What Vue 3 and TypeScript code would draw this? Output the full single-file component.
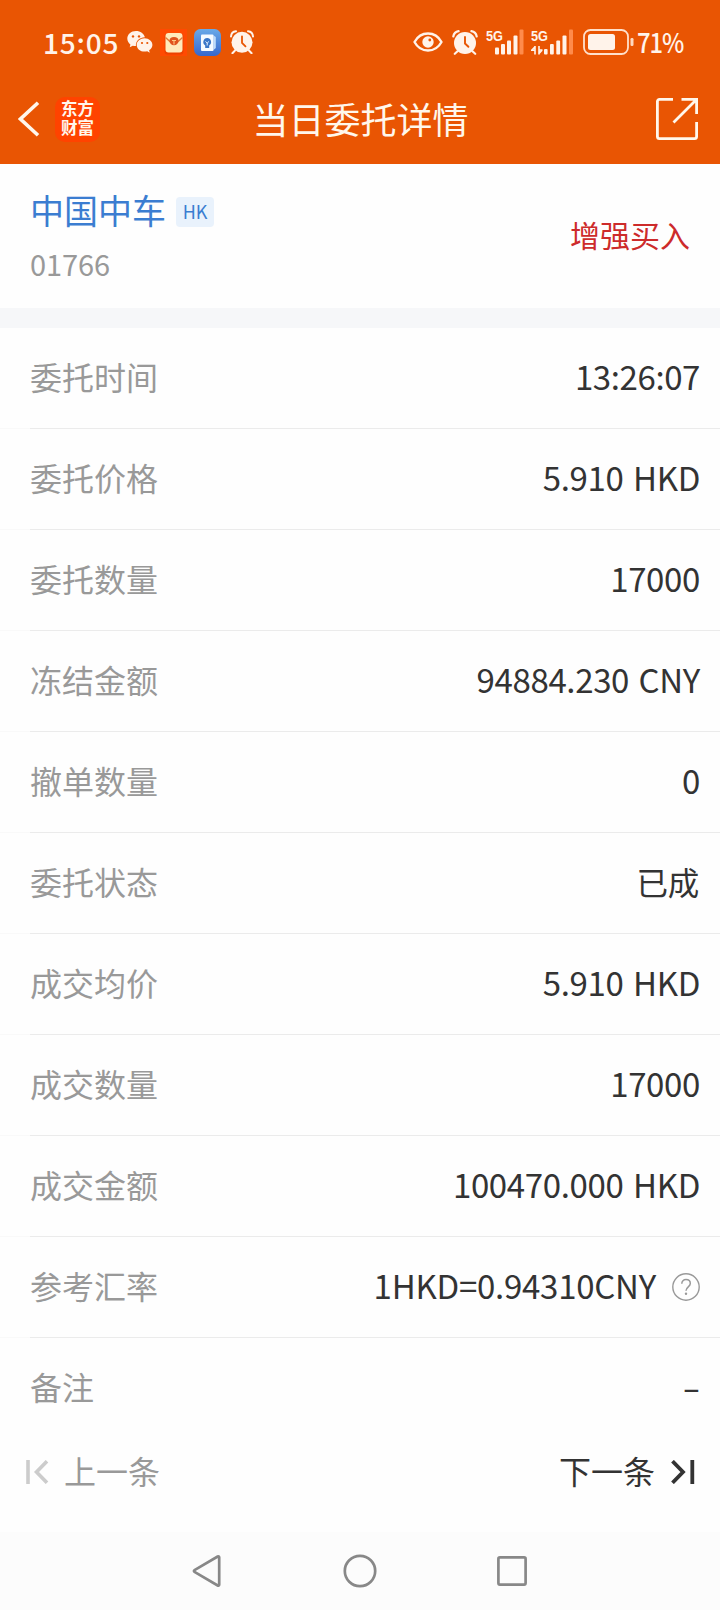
<script setup lang="ts">
interface DetailRow {
  label: string
  value: string
  help?: boolean
  kind?: string
}

const rows: DetailRow[] = [
  { label: '委托时间', value: '13:26:07', kind: 'time' },
  { label: '委托价格', value: '5.910 HKD' },
  { label: '委托数量', value: '17000' },
  { label: '冻结金额', value: '94884.230 CNY' },
  { label: '撤单数量', value: '0' },
  { label: '委托状态', value: '已成', kind: 'cjk' },
  { label: '成交均价', value: '5.910 HKD' },
  { label: '成交数量', value: '17000' },
  { label: '成交金额', value: '100470.000 HKD' },
  { label: '参考汇率', value: '1HKD=0.94310CNY', help: true, kind: 'rate' },
  { label: '备注', value: '-', kind: 'dash' },
]
</script>

<template>
  <div class="screen">
    <header class="top">
      <div class="status">
        <span class="clock">15:05</span>
        <svg class="wechat" width="26" height="23" viewBox="0 0 26 23">
          <path fill="#fff3ea" d="M9 0C4 0 .3 3.400.3 7.600c0 2.400 1.200 4.500 3.100 5.900L2.700 16.300l3.100-1.600c1 .3 2 .4 3.100.4C8.600 9.800 12.500 6.300 17.900 6.200 17 2.600 13.400 0 9 0Z" />
          <path fill="#fff3ea" d="M17.600 7.200c-4.400 0-7.900 3-7.900 6.700s3.500 6.700 7.900 6.700c.9 0 1.800-.1 2.600-.4l2.600 1.500-.7-2.400c2-1.200 3.300-3.200 3.300-5.400 0-3.700-3.500-6.700-7.800-6.700Z" />
          <g fill="#e95503"><circle cx="6" cy="5.400" r="1.200" /><circle cx="12" cy="5.400" r="1.200" /><circle cx="15" cy="12" r="1.100" /><circle cx="20.300" cy="12" r="1.100" /></g>
        </svg>
        <svg class="envelope" width="27" height="27" viewBox="0 0 27 27">
          <rect width="27" height="27" fill="#ff4a02" />
          <rect x="4.500" y="4.500" width="19" height="21" rx="3" fill="#c83500" opacity=".35" />
          <rect x="5.500" y="4" width="17" height="19.500" rx="3" fill="#ffeabc" />
          <path d="M5.500 8.500 10.500 13h7l5-4.500" fill="none" stroke="#e07a3c" stroke-width="1.400" />
          <path d="M9.500 11.500a4.500 3.500 0 0 1 9 0c0 3-2 4.800-4.500 4.800s-4.500-1.800-4.500-4.800Z" fill="#e0531e" />
          <path d="M12 11.500h4M14 11.500v4" stroke="#ffc884" stroke-width="1.100" />
        </svg>
        <svg class="bluebook" width="27" height="27" viewBox="0 0 27 27">
          <defs><linearGradient id="book" x1="0" y1="0" x2="0" y2="1"><stop offset="0" stop-color="#69a9e8" /><stop offset="1" stop-color="#3667cd" /></linearGradient></defs>
          <rect width="27" height="27" rx="6.500" fill="url(#book)" />
          <path d="M19.500 6.500 21.800 8v11l-2.300 2" fill="#bfdcfa" />
          <rect x="7" y="5.500" width="12.500" height="16.500" rx="1" fill="#f5faff" />
          <path d="M13.200 9a4 4 0 0 0-2 7.400V19h4v-2.600a4 4 0 0 0-2-7.400Z" fill="#3975c7" />
          <path d="m11.500 12.500 1.700 1.500 1.700-1.500M13.200 14v2.500" fill="none" stroke="#e6f2ff" />
        </svg>
        <svg class="alarm left-alarm" width="24" height="24" viewBox="0 0 24 24">
          <circle cx="12" cy="12.300" r="10.500" fill="#fff3ea" />
          <path d="M1 6.500C1.200 3.500 3.200 1.500 6 1.200M23 6.500c-.2-3-2.200-5-5-5.300M5 20.500l-2.600 2.700M19 20.500l2.600 2.700" fill="none" stroke="#fff3ea" stroke-width="2" stroke-linecap="round" />
          <path d="M12 6.300v6.500l3.500 3.600" fill="none" stroke="#e95503" stroke-width="1.800" stroke-linecap="round" />
        </svg>
        <span class="spring"></span>
        <svg class="eye" width="30" height="20" viewBox="0 0 30 20">
          <path d="M1.500 10C4.500 4.500 9.500 1.500 15 1.500S25.500 4.500 28.500 10C25.500 15.500 20.500 18.500 15 18.500S4.500 15.500 1.500 10Z" fill="none" stroke="#fff3ea" stroke-width="2.400" stroke-linejoin="round" />
          <circle cx="15" cy="10" r="5.700" fill="#fff3ea" /><circle cx="16.800" cy="8" r="1.400" fill="#e95503" />
        </svg>
        <svg class="alarm" width="26" height="25" viewBox="0 0 26 25">
          <circle cx="13" cy="13" r="11" fill="#fff3ea" />
          <path d="M1.300 6.500C1.800 3.700 3.800 1.700 6.600 1.200M24.700 6.500c-.5-2.800-2.500-4.800-5.300-5.300M5.500 21.300l-2.700 2.500M20.500 21.300l2.700 2.500" fill="none" stroke="#fff3ea" stroke-width="2.200" stroke-linecap="round" />
          <path d="M13 7v6.500l3.400 3.300" fill="none" stroke="#e95503" stroke-width="1.900" stroke-linecap="round" />
        </svg>
        <svg class="signal one" width="38" height="28" viewBox="0 0 38 28">
          <text x="0" y="13" class="net" textLength="17" lengthAdjust="spacingAndGlyphs">5G</text>
          <g fill="#fff3ea"><rect x="9" y="19.500" width="4" height="7" rx="1" /><rect x="15" y="16" width="4" height="10.500" rx="1" /><rect x="21" y="12.500" width="4" height="14" rx="1" /><rect x="27.500" y="7.500" width="4" height="19" rx="1" /></g>
          <rect x="33.500" y="1.500" width="4" height="25" rx="1" fill="#ff8b4b" />
        </svg>
        <svg class="signal two" width="43" height="28" viewBox="0 0 43 28">
          <text x="0" y="13" class="net" textLength="17" lengthAdjust="spacingAndGlyphs">5G</text>
          <path d="M4 18v8.500M0 22.300h4.500M1 22l3-3.200M8 18v8.500M8 25.500l3-3.200M7.500 22h4" fill="none" stroke="#fff3ea" stroke-width="1.600" />
          <g fill="#fff3ea"><rect x="13" y="21" width="3.600" height="5.500" rx="1" /><rect x="19" y="16" width="3.800" height="10.500" rx="1" /><rect x="25.300" y="12.500" width="3.800" height="14" rx="1" /><rect x="31.500" y="7.500" width="4" height="19" rx="1" /></g>
          <rect x="38" y="1.500" width="4" height="25" rx="1" fill="#ff8b4b" />
        </svg>
        <svg class="battery" width="51" height="26" viewBox="0 0 51 26">
          <rect x="1" y="1" width="44" height="24" rx="6.500" fill="none" stroke="#ffe0cb" stroke-width="1.800" />
          <rect x="5" y="5" width="27" height="16" rx="2.500" fill="#fff3ea" />
          <rect x="47.500" y="9" width="3" height="8" rx="1.200" fill="#ffd9c0" />
        </svg>
        <span class="percent">71%</span>
      </div>
      <div class="titlebar">
        <svg class="back" width="22" height="36" viewBox="0 0 22 36"><path d="M20 1.800 2.500 18 20 34.200" fill="none" stroke="#fff7ec" stroke-width="3.600" /></svg>
        <div class="logo"><span>东方</span><span>财富</span></div>
        <h1>当日委托详情</h1>
        <svg class="share" width="42" height="42" viewBox="0 0 42 42">
          <path d="M17 1.400H3.500a2.100 2.100 0 0 0-2.100 2.100v35a2.100 2.100 0 0 0 2.100 2.100h35a2.100 2.100 0 0 0 2.100-2.100V24M25.500 1.400h15.100V16M40 2 17.500 24.500" fill="none" stroke="#fff7ec" stroke-width="2.800" />
        </svg>
      </div>
    </header>

    <section class="stock">
      <div>
        <div class="name-line"><span class="name">中国中车</span><span class="market">HK</span></div>
        <div class="code">01766</div>
      </div>
      <span class="side">增强买入</span>
    </section>

    <main class="list">
      <div v-for="row in rows" :key="row.label" class="row">
        <span class="label">{{ row.label }}</span>
        <span class="value" :class="row.kind">{{ row.value }}</span>
        <svg v-if="row.help" class="help" width="28" height="28" viewBox="0 0 28 28">
          <circle cx="14" cy="14" r="13.200" fill="none" stroke="#999" stroke-width="1.400" />
          <path d="M9.800 10.800C9.800 8.200 11.500 6.600 14 6.600s4.300 1.500 4.300 3.900c0 3.200-4.300 3.500-4.300 7.200" fill="none" stroke="#999" stroke-width="1.500" />
          <circle cx="14" cy="20.800" r="1.200" fill="#999" />
        </svg>
      </div>
    </main>

    <footer class="pager">
      <span class="step prev">
        <svg width="24" height="24" viewBox="0 0 24 24"><path d="M2 0v24M21 1.200 10.500 12 21 22.800" fill="none" stroke="#ccc" stroke-width="3.600" /></svg>
        <span>上一条</span>
      </span>
      <span class="step next">
        <span>下一条</span>
        <svg width="24" height="24" viewBox="0 0 24 24"><path d="M21.300 0v24M1.500 1.200 12 12 1.500 22.800" fill="none" stroke="#333" stroke-width="3.800" /></svg>
      </span>
    </footer>

    <nav class="keys">
      <svg width="30" height="34" viewBox="0 0 30 34"><path d="M27.200 3.300v27.400a1 1 0 0 1-1.500.8L2.500 17.900a1 1 0 0 1 0-1.800L25.700 2.500a1 1 0 0 1 1.500.8Z" fill="none" stroke="#888" stroke-width="2.700" /></svg>
      <svg width="34" height="34" viewBox="0 0 34 34"><circle cx="17" cy="17" r="15.200" fill="none" stroke="#888" stroke-width="2.700" /></svg>
      <svg width="30" height="30" viewBox="0 0 30 30"><rect x="1.400" y="1.400" width="27.200" height="27.200" rx="1.500" fill="none" stroke="#888" stroke-width="2.700" /></svg>
    </nav>
  </div>
</template>

<style>
body { margin: 0; background: #fefefe; }
</style>

<style scoped>
.screen {
  width: 720px;
  height: 1610px;
  overflow: hidden;
  display: flex;
  flex-direction: column;
  background: #fefefe;
  color: #333;
  font-family: "Noto Sans CJK SC", sans-serif;
}
svg { display: block; flex: none; }
.top { height: 164px; flex: none; background: #e95503; color: #fff7ec; }
.status {
  height: 84px;
  box-sizing: border-box;
  padding: 0 38px 0 43px;
  display: flex;
  align-items: center;
}
.clock, .percent { font: 500 27px/28px "Noto Sans CJK SC", sans-serif; color: #fff3ea; padding-bottom: 1px; }
.clock { width: 84px; letter-spacing: .8px; font-size: 28px; }
.percent { width: 45px; margin-left: 3px; letter-spacing: -1.200px; white-space: nowrap; transform: scaleX(.88); transform-origin: left center; }
.envelope { margin-left: 7px; }
.bluebook { margin-left: 7px; }
.left-alarm { margin-left: 9px; }
.spring { flex: 1; }
.eye { margin-right: 9px; }
.signal { overflow: visible; }
.signal.one { margin-left: 8px; }
.signal.two { margin-left: 7px; }
.battery { margin-left: 9px; }
.net { font: 700 15px "Liberation Sans", sans-serif; fill: #fff3ea; }
.titlebar {
  height: 80px;
  box-sizing: border-box;
  padding: 0 22px 10px 18px;
  display: grid;
  grid-template-columns: 37px 45px 1fr 35px 42px;
  align-items: center;
}
.logo {
  width: 45px;
  height: 45px;
  border-radius: 10px;
  background: #ff4300;
  display: flex;
  flex-direction: column;
  align-items: center;
  justify-content: center;
  font-family: "Liberation Serif", "Noto Sans CJK SC", serif;
  font-weight: 700;
  font-size: 16.5px;
  line-height: 19.5px;
}
h1 { margin: 0; padding: 0 0 2px 0; text-align: center; font-size: 36px; line-height: 44px; font-weight: 400; }
.share { grid-column: 5; }
.stock {
  height: 164px;
  flex: none;
  box-sizing: border-box;
  border-bottom: 20px solid #f6f7f9;
  padding: 25px 30px 0 30px;
  display: flex;
  justify-content: space-between;
}
.name-line { display: flex; align-items: center; height: 46px; }
.name { font-size: 34px; line-height: 42px; color: #3b7dd1; padding-bottom: 4px; }
.market {
  margin-left: 10px;
  width: 38px;
  height: 30px;
  border-radius: 4px;
  background: #e9f2fc;
  color: #3b7dd1;
  text-align: center;
  font-size: 18px;
  line-height: 29px;
}
.code { font-size: 29px; line-height: 38px; margin-top: 9px; color: #999; letter-spacing: -.1px; }
.side { font-size: 30px; line-height: 40px; margin-top: 25px; color: #cd2b2b; }
.list { flex: none; }
.row {
  height: 101px;
  box-sizing: border-box;
  padding: 0 20px 6px 30px;
  display: flex;
  align-items: center;
  background: linear-gradient(to right, #f9f9f9 30px, #ebebeb 30px) bottom / 100% 1px no-repeat;
}
.row:last-child { background: none; height: 100px; padding-bottom: 5px; }
.label { flex: 1; font-size: 32px; line-height: 40px; color: #999; }
.value { font-size: 33px; line-height: 40px; letter-spacing: -.35px; word-spacing: 2.500px; }
.value.time { letter-spacing: -.4px; }
.value.rate { letter-spacing: -.25px; }
.value.cjk { font-size: 31.5px; letter-spacing: -.3px; margin-right: 1px; }
.value.dash { transform: scaleX(1.6); transform-origin: right center; }
.help { margin: 4px 0 0 16px; }
.pager {
  height: 94px;
  flex: none;
  box-sizing: border-box;
  padding: 0 25px 26px 26px;
  display: flex;
  align-items: center;
  justify-content: space-between;
}
.step { display: flex; align-items: center; font-size: 32px; line-height: 40px; }
.step > span { padding-bottom: 4px; }
.prev { color: #999; gap: 14px; }
.next { gap: 16px; }
.keys {
  flex: 1;
  background: #fcfcfc;
  display: flex;
  justify-content: center;
  align-items: center;
  gap: 120.5px;
  padding-right: 1px;
}
</style>
